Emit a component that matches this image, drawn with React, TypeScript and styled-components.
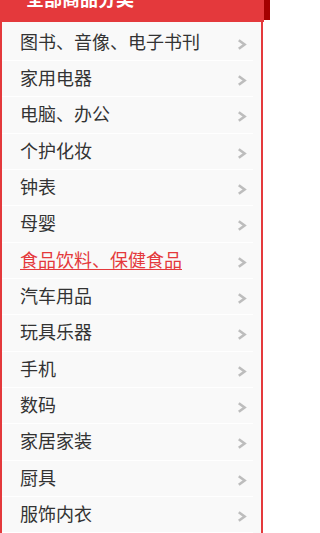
import React from "react";
import styled, { createGlobalStyle } from "styled-components";

const Global = createGlobalStyle`
  html, body { margin: 0; padding: 0; background: #fff; }
  body { font-family: "Noto Sans CJK SC", "Microsoft YaHei", sans-serif; overflow: hidden; }
`;

const Page = styled.div`
  width: 270px;
  height: 533px;
  overflow: hidden;
  display: flex;
  flex-direction: column;
`;

const TopBar = styled.div`
  display: flex;
  align-items: flex-start;
  height: 22px;
`;

const Header = styled.div`
  width: 264px;
  height: 22px;
  background: #e4393c;
  overflow: hidden;
  padding-left: 26px;
  box-sizing: border-box;
`;

const HeaderTitle = styled.div`
  margin-top: -13px;
  line-height: 22px;
  font-size: 18px;
  font-weight: 700;
  color: #fff;
`;

const SideStrip = styled.div`
  flex: 1;
  height: 20px;
  background: #a40000;
`;

const List = styled.ul`
  list-style: none;
  margin: 0;
  padding: 2.67px 0 0;
  width: 263px;
  box-sizing: border-box;
  border-left: 2px solid #e4393c;
  border-right: 2px solid #e4393c;
  background: #f9f9f9;
  flex: 1;
`;

const Row = styled.li`
  height: 35.33px;
  margin-right: 8px;
  border-bottom: 1px solid #ffffff;
  display: flex;
  align-items: center;
  justify-content: space-between;
  padding: 0 6px 0 18px;
`;

const Label = styled.a<{ $active?: boolean }>`
  font-size: 18px;
  line-height: 20px;
  margin-top: -3px;
  color: ${(p) => (p.$active ? "#e4393c" : "#333")};
  text-decoration: ${(p) => (p.$active ? "underline" : "none")};
  text-underline-offset: 2px;
`;

const Chevron = styled.svg`
  width: 10px;
  height: 11px;
  margin-top: 4px;
  flex-shrink: 0;
`;

const items = [
  "图书、音像、电子书刊",
  "家用电器",
  "电脑、办公",
  "个护化妆",
  "钟表",
  "母婴",
  "食品饮料、保健食品",
  "汽车用品",
  "玩具乐器",
  "手机",
  "数码",
  "家居家装",
  "厨具",
  "服饰内衣",
];

export default function App() {
  return (
    <Page>
      <Global />
      <TopBar>
        <Header>
          <HeaderTitle>全部商品分类</HeaderTitle>
        </Header>
        <SideStrip />
      </TopBar>
      <List>
        {items.map((t, i) => (
          <Row key={t}>
            <Label $active={i === 6}>{t}</Label>
            <Chevron viewBox="0 0 10 11">
              <polyline
                points="1.8,1.2 7.6,5.5 1.8,9.8"
                fill="none"
                stroke="#bdbdbd"
                strokeWidth="2.6"
              />
            </Chevron>
          </Row>
        ))}
      </List>
    </Page>
  );
}
